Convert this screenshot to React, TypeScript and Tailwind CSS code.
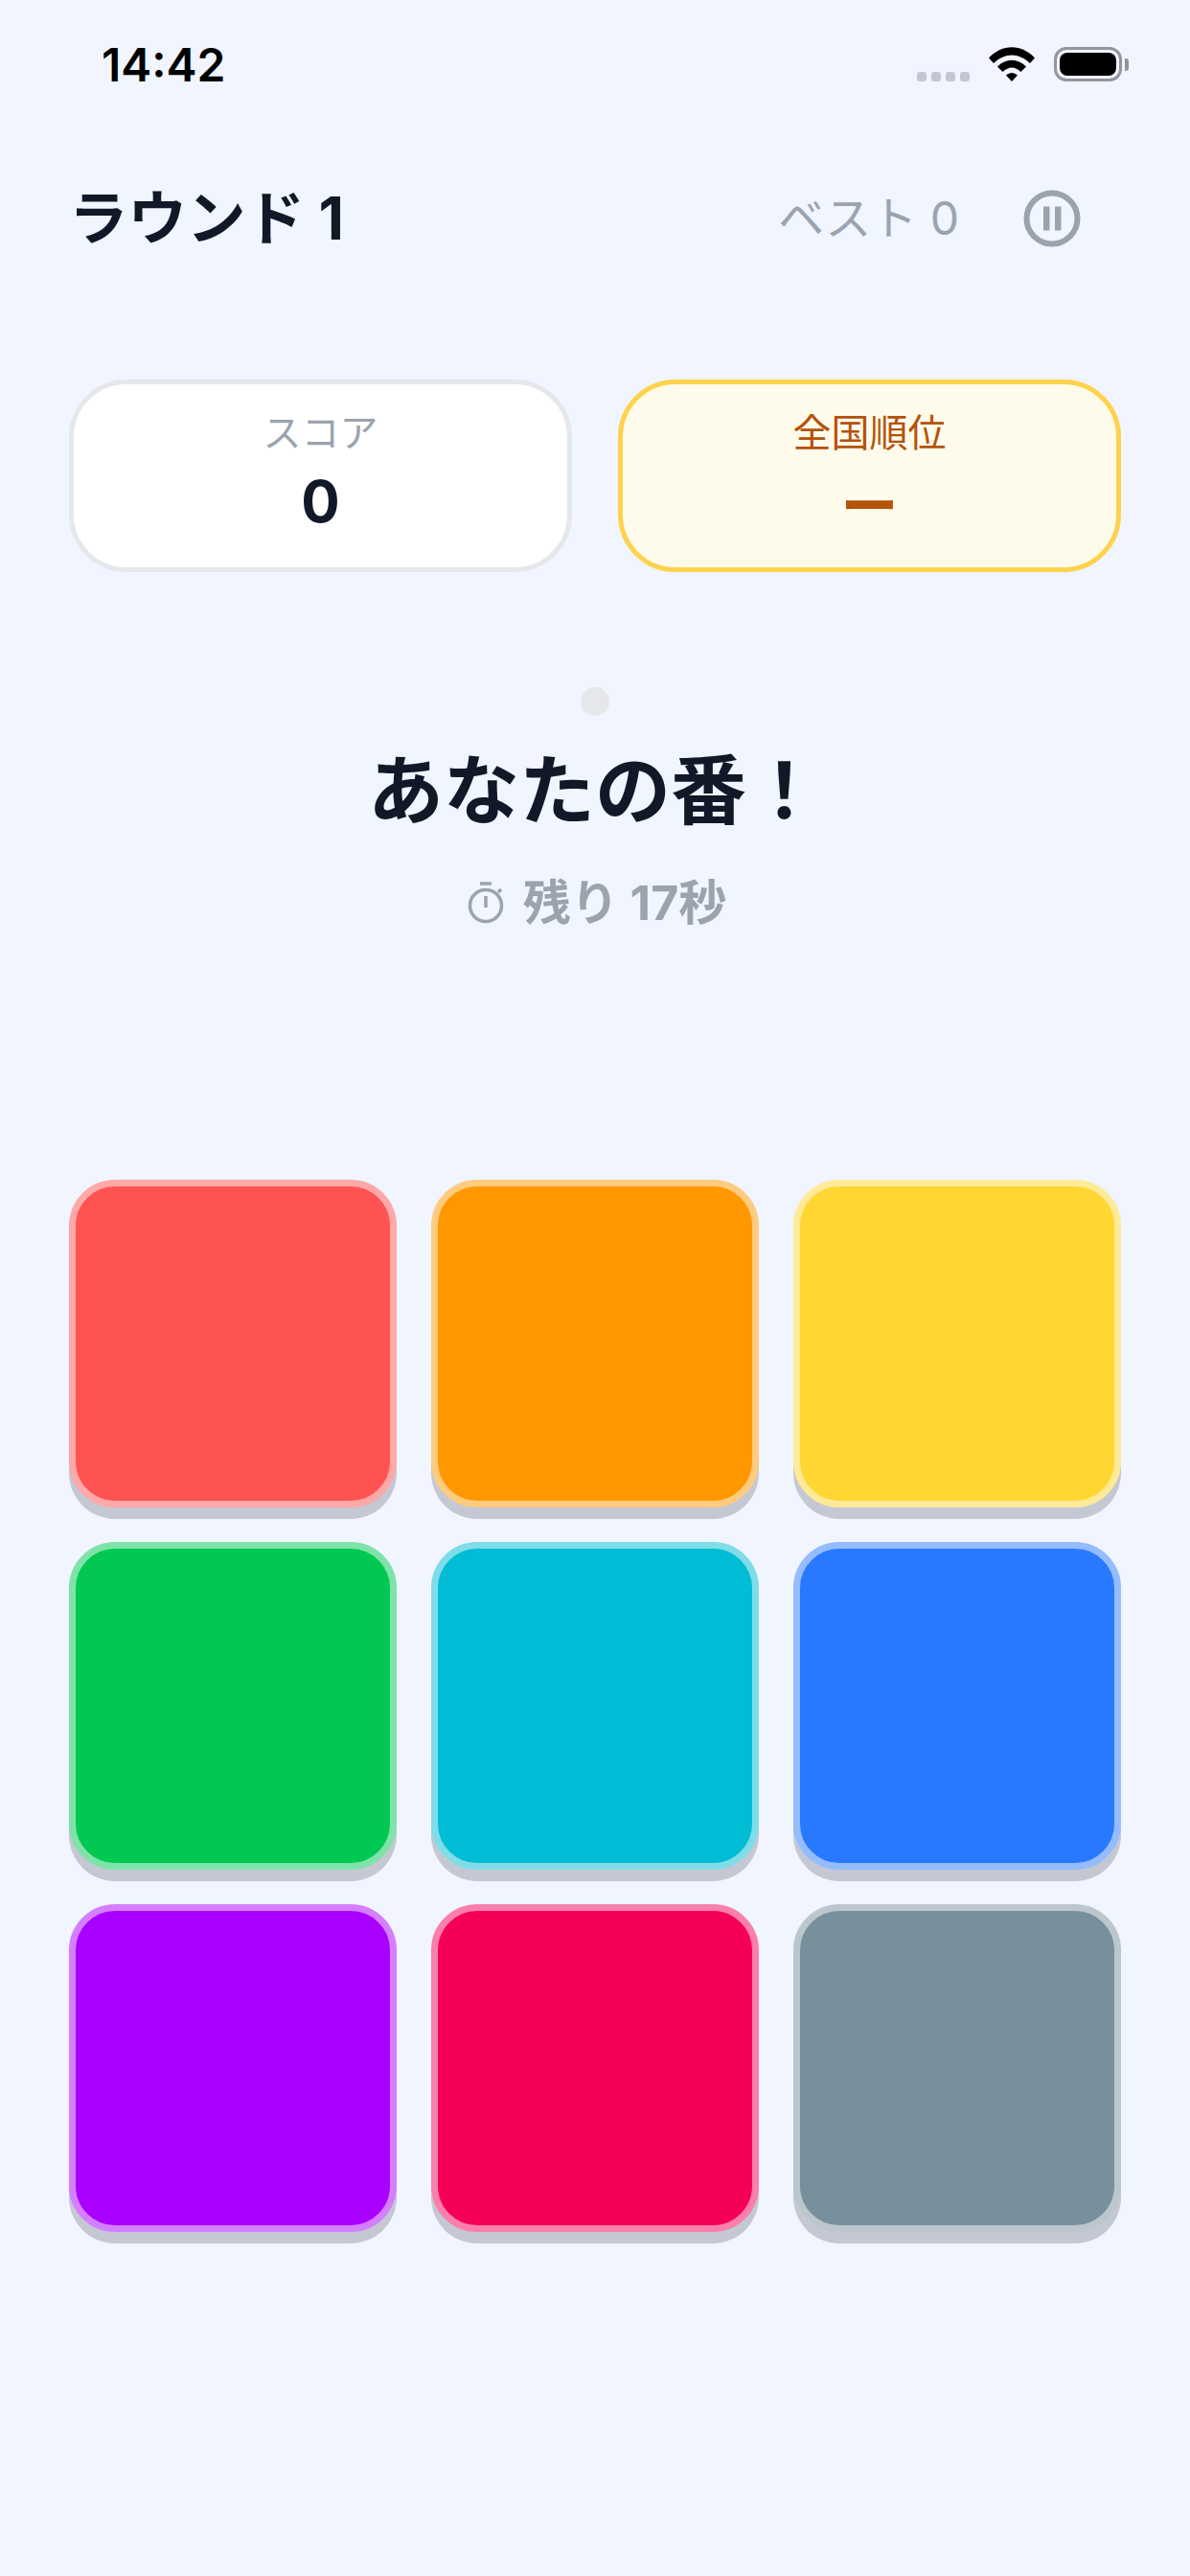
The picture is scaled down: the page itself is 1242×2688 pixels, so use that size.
const font = { fontFamily: '"Inter", "Noto Sans CJK JP", sans-serif' };

const tiles = [
  'bg-[#ff5252] border-[#ffa8a8]',
  'bg-[#ff9800] border-[#ffcb7f]',
  'bg-[#ffd632] border-[#ffea98]',
  'bg-[#00c853] border-[#7fe3a9]',
  'bg-[#00bcd4] border-[#7fdde9]',
  'bg-[#2979ff] border-[#94bcff]',
  'bg-[#aa00ff] border-[#d47fff]',
  'bg-[#f50057] border-[#fa7fab]',
  'bg-[#78909c] border-[#bbc7cd]',
];

function StatusBar() {
  return (
    <div className="flex h-[180px] items-start justify-between pl-[106px] pr-[64px] pt-[41px]">
      <span className="text-[48px] font-semibold leading-[54px] text-black">14:42</span>
      <div className="flex items-end gap-[20px] pt-[8px]">
        <div className="flex gap-[5px]">
          {[0, 1, 2, 3].map((i) => (
            <span key={i} className="h-[10px] w-[10px] rounded-[3px] bg-[#c4c7d3]" />
          ))}
        </div>
        <svg width="48" height="36" viewBox="0 0 48 36">
          <path d="M0 11.5 C14 -3.5 34 -3.5 48 11.5 L43 17 C31 5.5 17 5.5 5 17 Z" fill="#000" />
          <path d="M9 20.5 C18 11.5 30 11.5 39 20.5 L33.5 26 C27 20 21 20 14.5 26 Z" fill="#000" />
          <path d="M18 29.5 C22 26 26 26 30 29.5 L24 36 Z" fill="#000" />
        </svg>
        <div className="flex items-center">
          <div className="flex h-[36px] w-[71px] items-center justify-center rounded-[13px] border-[3px] border-[#93959c] p-[3px]">
            <div className="h-full w-full rounded-[8px] bg-black" />
          </div>
          <div className="ml-[3px] h-[13px] w-[4px] rounded-r-[3px] bg-[#93959c]" />
        </div>
      </div>
    </div>
  );
}

function Header() {
  return (
    <div className="flex h-[96px] items-center justify-between pl-[72px] pr-[114px]">
      <h1 className="text-[61.5px] font-bold leading-[96px] text-[#111827]">ラウンド 1</h1>
      <div className="flex items-center gap-[67px]">
        <span className="text-[48px] leading-[72px] text-[#9ca3af]">ベスト 0</span>
        <svg width="60" height="60" viewBox="0 0 60 60" fill="#9ca3af">
          <circle cx="30" cy="30" r="26.5" fill="none" stroke="#9ca3af" strokeWidth="6" />
          <rect x="21" y="17.5" width="6.5" height="25" />
          <rect x="33" y="17.5" width="6.5" height="25" />
        </svg>
      </div>
    </div>
  );
}

function Stat({ label, value, box, labelColor, valueClass }: { label: string; value: string; box: string; labelColor: string; valueClass: string }) {
  return (
    <div className={`flex h-[201px] flex-col items-center rounded-[60px] border-[5px] pt-[21px] ${box}`}>
      <span className={`text-[40px] leading-[60px] ${labelColor}`}>{label}</span>
      <span className={`mt-[5px] text-[60px] font-bold leading-[72px] ${valueClass}`}>{value}</span>
    </div>
  );
}

function Timer() {
  return (
    <svg width="40" height="44" viewBox="0 0 40 44" fill="none" stroke="#9ca3af" strokeWidth="3.5">
      <circle cx="19" cy="25" r="16.5" />
      <path d="M13 2 H25 M19 15 V27 M32 11 L35 8" />
    </svg>
  );
}

export default function App() {
  return (
    <div className="min-h-[2688px] bg-[#f0f5ff]" style={font}>
      <StatusBar />
      <Header />
      <div className="grid grid-cols-2 gap-[48px] px-[72px] pt-[120px]">
        <Stat label="スコア" value="0" box="border-[#e5e7eb] bg-white" labelColor="text-[#9ca3af]" valueClass="text-[#111827]" />
        <Stat label="全国順位" value="ー" box="border-[#ffd24d] bg-[#fffbeb]" labelColor="text-[#b45309]" valueClass="pt-[5px] text-[#b45309]" />
      </div>
      <div className="flex flex-col items-center pt-[120px]">
        <div className="h-[30px] w-[30px] rounded-full bg-[#e5e7eb]" />
        <h2 className="mt-[30px] text-[79px] font-bold leading-[96px] text-[#111827]">あなたの番！</h2>
        <div className="ml-[4px] mt-[39px] flex items-center gap-[18px]">
          <Timer />
          <span className="text-[50px] font-bold leading-[60px] text-[#9ca3af]">残り 17秒</span>
        </div>
      </div>
      <div className="grid grid-cols-3 gap-[36px] px-[72px] pt-[259px]">
        {tiles.map((t) => (
          <div key={t} className={`aspect-square rounded-[48px] border-[7.5px] shadow-[0_12px_0_#c4c8d3] ${t}`} />
        ))}
      </div>
    </div>
  );
}
